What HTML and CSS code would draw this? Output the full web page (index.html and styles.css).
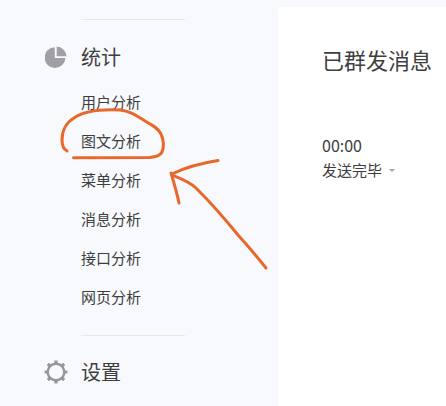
FILE: index.html
```html
<!DOCTYPE html>
<html lang="zh">
<head>
<meta charset="utf-8">
<title>已群发消息</title>
<link rel="stylesheet" href="styles.css">
</head>
<body>
<div class="page">
  <aside class="sidebar">
    <div class="rule rule-top"></div>
    <div class="group-head">
      <svg class="group-icon" viewBox="0 0 22 22" aria-hidden="true">
        <path fill="#a09fa6" d="M9.8 1.2 V11.9 H20.4 A10.4 10.4 0 1 1 9.8 1.2 Z"/>
        <path fill="#a09fa6" d="M11.7 0.6 A10.3 10.3 0 0 1 21.4 10.2 H11.7 Z"/>
      </svg>
      <span>统计</span>
    </div>
    <nav class="menu">
      <a class="menu-item">用户分析</a>
      <a class="menu-item">图文分析</a>
      <a class="menu-item">菜单分析</a>
      <a class="menu-item">消息分析</a>
      <a class="menu-item">接口分析</a>
      <a class="menu-item">网页分析</a>
    </nav>
    <div class="rule rule-bottom"></div>
    <div class="group-head group-settings">
      <svg class="group-icon gear" viewBox="0 0 24 24" aria-hidden="true">
        <circle cx="12" cy="12" r="8.3" fill="none" stroke="#96979a" stroke-width="2.4"/>
        <g stroke="#96979a" stroke-width="3.2">
          <path d="M12 .6v3.4M12 20v3.4M.6 12H4M20 12h3.4M3.9 3.9l2.4 2.4M17.7 17.7l2.4 2.4M3.9 20.1l2.4-2.4M17.7 6.3l2.4-2.4"/>
        </g>
      </svg>
      <span>设置</span>
    </div>
  </aside>
  <main class="card">
    <h1 class="title">已群发消息</h1>
    <div class="time">00:00</div>
    <div class="status">发送完毕<span class="caret"></span></div>
  </main>
  <svg class="scribble" viewBox="0 0 446 406" aria-hidden="true">
    <path d="M67 151 C63 149 62 146 62 140 C62 130 67 122 74 118 C84 111 100 109 120 110 C130 111 137 116 145 121 C152 125 158 128 161 134 C164 140 164 148 162 152 C160 156 156 157 150 157.500 L73.500 157.800"/>
    <path d="M218 160.500 C202 163 186 167 172 174"/>
    <path d="M171 173 C174 183 177 193 179 203"/>
    <path d="M172 175 C182 179 190 182 196 188 C210 202 225 219 238 235 C248 246 258 258 266 268"/>
  </svg>
</div>
</body>
</html>
```
FILE: styles.css
```css
* { box-sizing: border-box; }
html, body { margin: 0; padding: 0; }
body {
  width: 446px;
  height: 406px;
  overflow: hidden;
  background: #f7f9fd;
  font-family: "Noto Sans CJK SC", "Liberation Sans", sans-serif;
  color: #3e3e3e;
}
.page {
  position: relative;
  display: flex;
  width: 446px;
  height: 406px;
  overflow: hidden;
}
.sidebar {
  width: 278px;
  flex: none;
  padding: 19px 0 0 45px;
}
.rule {
  width: 104px;
  height: 1px;
  margin-left: 36px;
  background: #e6e8ec;
}
.group-head {
  display: flex;
  align-items: center;
  gap: 14px;
  height: 26px;
  margin-top: 24px;
  font-size: 20px;
  line-height: 26px;
}
.group-icon { width: 22px; height: 22px; flex: none; }
.menu {
  display: flex;
  flex-direction: column;
  margin-top: 13px;
  padding-left: 36px;
}
.menu-item {
  height: 39px;
  font-size: 15px;
  line-height: 38px;
}
.rule-bottom { margin-top: 18px; }
.group-settings { margin-top: 23px; }
.gear { width: 24px; height: 24px; margin-left: -1px; margin-right: -1px; }
.card {
  flex: 1;
  margin-top: 7px;
  padding: 36px 0 0 44px;
  background: #fff;
  border-radius: 3px 0 0 0;
}
.title {
  margin: 0;
  font-size: 22px;
  font-weight: 400;
  line-height: 32px;
}
.time {
  margin-top: 60px;
  font-size: 16px;
  line-height: 20px;
}
.status {
  display: flex;
  align-items: center;
  margin-top: 4px;
  font-size: 15px;
  line-height: 22px;
}
.caret {
  width: 0;
  height: 0;
  margin-left: 7px;
  border-left: 3px solid transparent;
  border-right: 3px solid transparent;
  border-top: 3px solid #a5a5a5;
}
.scribble {
  position: absolute;
  left: 0;
  top: 0;
  width: 446px;
  height: 406px;
  fill: none;
  stroke: #e8672a;
  stroke-width: 3;
  stroke-linecap: round;
  stroke-linejoin: round;
}
```
